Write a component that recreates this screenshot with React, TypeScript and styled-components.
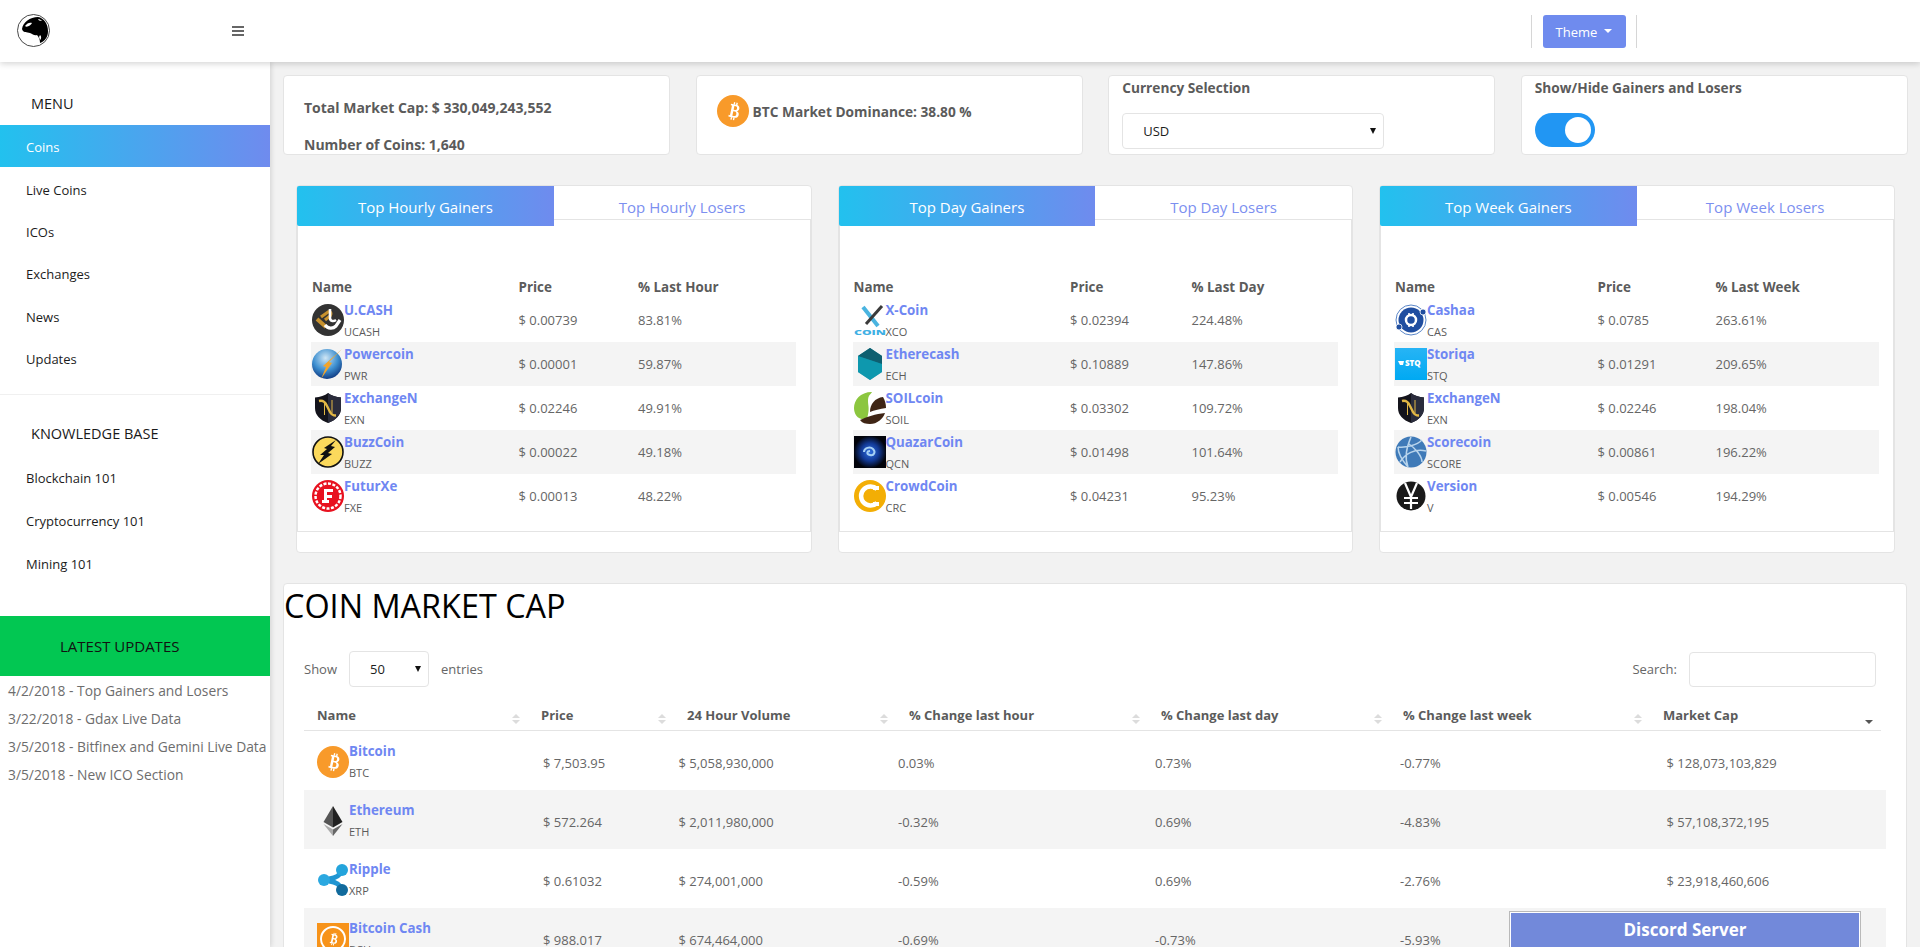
import React from "react";
import styled, { createGlobalStyle } from "styled-components";

const GRAD = "linear-gradient(90deg, #22c1ee 0%, #6f8bee 100%)";
const BLUE = "#6f87f2";

const Global = createGlobalStyle`
  html, body { margin: 0; padding: 0; height: 100%; overflow: hidden; }
  body { background: #f2f2f2; font-family: "Open Sans", "Liberation Sans", sans-serif; font-size: 13px; color: #5b5b5b; }
  * { box-sizing: border-box; }
`;

const Page = styled.div`height: 947px; overflow: hidden; display: flex; flex-direction: column;`;
const Header = styled.header`
  position: relative; z-index: 3; flex: 0 0 62px; height: 62px; background: #fff;
  box-shadow: 0 2px 6px rgba(0,0,0,.16); display: flex; align-items: center;
`;
const LogoWrap = styled.div`margin-left: 17px; width: 33px; height: 33px; margin-top: -1px; svg { display: block; }`;
const Burger = styled.div`
  margin-left: 182px; width: 12px; display: flex; flex-direction: column; gap: 2px;
  span { display: block; height: 2.2px; background: #666; }
`;
const RightGroup = styled.div`
  margin-left: auto; margin-right: 283px; height: 33px; display: flex; width: 106px;
  border-left: 1px solid #d6d6d6; border-right: 1px solid #d6d6d6; justify-content: center; margin-top: 1px;
`;
const ThemeBtn = styled.div`
  width: 83px; height: 33px; background: #6f8bee; border-radius: 3px; color: #fff; font-size: 13px;
  display: flex; align-items: center; justify-content: center; gap: 7px;
  &::after { content: ""; border-left: 4px solid transparent; border-right: 4px solid transparent; border-top: 4px solid #fff; margin-top: -2px; }
`;
const Layout = styled.div`display: flex; flex: 1; min-height: 0;`;
const Sidebar = styled.aside`
  position: relative; z-index: 2; flex: 0 0 270px; width: 270px; background: #fff;
  box-shadow: 1px 0 5px rgba(0,0,0,.14); display: flex; flex-direction: column;
`;
const SideHeading = styled.div<{ $h: number; $pt: number }>`
  height: ${p => p.$h}px; padding: ${p => p.$pt}px 0 0 31px; font-size: 14.5px; color: #1a1a1a; display: flex; align-items: center;
`;
const SideItem = styled.div<{ $active?: boolean; $h: number }>`
  height: ${p => p.$h}px; padding: ${p => (p.$active ? 1 : 0)}px 0 0 26px; display: flex; align-items: center; font-size: 13px;
  margin-bottom: ${p => (p.$active ? 2 : 0)}px;
  color: ${p => (p.$active ? "#fff" : "#1c1c1c")}; background: ${p => (p.$active ? GRAD : "transparent")};
`;
const SideDivider = styled.div`height: 1px; background: #f0f0f0; margin-top: 14px;`;
const Green = styled.div`
  margin-top: 31px; height: 60px; background: #02c752; color: #111; font-size: 15px; display: flex;
  align-items: center; padding-left: 60px;
`;
const Updates = styled.div`padding: 1px 0 0 8px; display: flex; flex-direction: column;`;
const UpdateLine = styled.div`height: 28px; line-height: 28px; font-size: 13.8px; color: #6d6d6d; white-space: nowrap;`;

const Main = styled.main`flex: 1; min-width: 0; padding: 13px 13px 0 13px;`;
const StatsRow = styled.div`display: grid; grid-template-columns: repeat(4, 387px); gap: 25.6px;`;
const Card = styled.div`background: #fff; border: 1px solid #e4e4e4; border-radius: 4px;`;
const StatCard = styled(Card)`height: 80px; overflow: hidden; font-weight: 700; color: #5b5b5b; font-size: 13.7px;`;
const TotalStat = styled(StatCard)`padding: 21px 0 0 20px; font-size: 14px; p { margin: 0 0 16px; line-height: 21px; }`;
const DomStat = styled(StatCard)`display: flex; align-items: center; padding: 0 0 8px 20px; gap: 4px; svg { display: block; flex: none; }`;
const TitleStat = styled(StatCard)`padding: 0 0 0 13px;`;
const StatTitle = styled.div`line-height: 21px; margin-top: 1px;`;
const SelectWrap = styled.div<{ $w: number }>`
  position: relative; width: ${p => p.$w}px; 
  &::after {
    content: ""; position: absolute; right: 8px; top: 50%; margin-top: -3px;
    border-left: 3px solid transparent; border-right: 3px solid transparent; border-top: 6px solid #111;
  }
`;
const Select = styled.select`
  appearance: none; -webkit-appearance: none; display: block; width: 100%; height: 36px; background: #fff;
  border: 1px solid #e4e4e4; border-radius: 4px; font: 400 13px "Open Sans", sans-serif; color: #1c1c1c; padding: 0 20px;
  outline: none;
`;
const CurrencySelect = styled(SelectWrap)`margin-top: 15px;`;
const Switch = styled.div`
  position: relative; width: 60px; height: 34px; border-radius: 17px; background: #2196f3; margin-top: 15px;
  &::after { content: ""; position: absolute; right: 4px; top: 4px; width: 26px; height: 26px; border-radius: 50%; background: #fff; }
`;

const GainersRow = styled.div`
  display: grid; grid-template-columns: repeat(3, 515.5px); gap: 26px; padding: 0 13px; margin-top: 30px;
`;
const GainCard = styled(Card)`height: 368px; position: relative;`;
const Tabs = styled.div`display: grid; grid-template-columns: 1fr 1fr; height: 34px; border-bottom: 1px solid #e4e4e4;`;
const Tab = styled.div<{ $active?: boolean }>`
  height: ${p => (p.$active ? 40 : 33)}px; display: flex; align-items: center; justify-content: center; font-size: 15px;
  padding-top: ${p => (p.$active ? 1 : 8)}px;
  position: relative; z-index: 1; border-radius: 2px 0 0 2px;
  color: ${p => (p.$active ? "#fff" : "#7c8ff0")}; background: ${p => (p.$active ? GRAD : "transparent")};
`;
const TabPane = styled.div`
  height: 312px; border-left: 1px solid #e4e4e4; border-right: 1px solid #e4e4e4; border-bottom: 1px solid #e4e4e4;
  padding: 57px 14px 0 13px;
`;
const MiniTable = styled.div`width: 485px;`;
const MiniRow = styled.div<{ $cols: string; $striped?: boolean }>`
  display: grid; grid-template-columns: ${p => p.$cols}; height: 44px; align-items: center;
  background: ${p => (p.$striped ? "#f4f4f4" : "transparent")}; color: #666;
`;
const MiniHead = styled.div<{ $cols: string }>`
  display: grid; grid-template-columns: ${p => p.$cols}; height: 21px; line-height: 21px; font-weight: 700; color: #5b5b5b; font-size: 13.4px;
`;
const CoinCell = styled.div`display: flex; padding-left: 1px; height: 100%;`;
const BigCoinCell = styled(CoinCell)`padding-left: 13px;`;
const IconBox = styled.div<{ $top: number }>`flex: 0 0 32px; width: 32px; height: 32px; margin-top: ${p => p.$top}px; svg { display: block; }`;
const CoinText = styled.div<{ $top: number }>`padding-top: ${p => p.$top}px;`;
const CoinName = styled.div`font-size: 13.3px; font-weight: 700; color: ${BLUE}; line-height: 21px;`;
const CoinSym = styled.div`font-size: 11px; color: #5b5b5b; line-height: 21px;`;

const TableCard = styled(Card)`margin-top: 30px; padding: 0 20px 0 20px; height: 600px;`;
const Title = styled.h1`margin: 0 0 0 -20px; padding-top: 1px; font-size: 32.4px; font-weight: 500; line-height: 40px; color: #000; height: 40px;`;
const Controls = styled.div`display: flex; justify-content: space-between; align-items: center; margin-top: 27px; height: 36px; padding-right: 10px;`;
const ControlGroup = styled.div`display: flex; align-items: center; gap: 12px; color: #666;`;
const SearchInput = styled.input`width: 187px; height: 35px; border: 1px solid #e4e4e4; border-radius: 4px; background: #fff; outline: none;`;
const HEAD_COLS = "224px 146px 222px 252px 242px 260px 231px";
const BODY_COLS = "226px 135.5px 219.5px 257px 245px 266.5px 232.5px";
const HeadRow = styled.div`
  display: grid; grid-template-columns: ${HEAD_COLS}; width: 1577px; height: 44px; border-bottom: 1px solid #e4e4e4; align-items: end;
`;
const HeadCell = styled.div`position: relative; padding: 0 0 4px 13px; line-height: 21px; font-weight: 700; color: #5b5b5b; white-space: nowrap;`;
const SortMark = styled.span<{ $dir?: "down" }>`
  position: absolute; right: 8px; top: 9px; width: 8px; height: 10px;
  &::before, &::after {
    content: ""; position: absolute; left: 0; border-left: 4px solid transparent; border-right: 4px solid transparent;
  }
  &::before { top: 0; border-bottom: 4.5px solid ${p => (p.$dir ? "transparent" : "#dcdcdc")}; }
  &::after { bottom: 0; border-top: 4.5px solid ${p => (p.$dir ? "#555" : "#dcdcdc")}; }
`;
const BodyRow = styled.div<{ $striped?: boolean }>`
  display: grid; grid-template-columns: ${BODY_COLS}; height: 59px; background: ${p => (p.$striped ? "#f4f4f4" : "transparent")}; color: #666;
`;
const BodyCell = styled.div`padding: 22px 0 0 13px; line-height: 21px; white-space: nowrap;`;
const Discord = styled.div`
  position: fixed; right: 60px; bottom: -5px; width: 350px; height: 40px; background: #7289da; color: #fff;
  font-size: 17px; font-weight: 700; text-align: center; line-height: 34px; z-index: 5;
  border: 1px solid #fff; outline: 1px solid #b9b9b9;
`;

type IconName = "ucash" | "pwr" | "exn" | "buzz" | "fxe" | "xco" | "ech" | "soil" | "qcn" | "crc" | "cas" | "stq" | "score" | "v" | "btc" | "eth" | "xrp" | "bch";

const BtcGlyph = ({ s = 1, fill = "#fff" }: { s?: number; fill?: string }) => (
  <g transform={`translate(16 16) rotate(12) scale(${s}) translate(-16 -16)`}>
    <path fill={fill} fillRule="evenodd" d="M12 8h6.2c2.9 0 4.5 1.5 4.5 3.8 0 1.6-.8 2.8-2.2 3.4 1.9.5 3 1.9 3 3.9 0 2.8-2 4.4-5.2 4.400H12v-2h1.500V10H12zm4.400 2v4.300h1.600c1.300 0 2-.8 2-2.200s-.7-2.100-2-2.100zm0 6.200v5.400h1.800c1.600 0 2.400-1 2.400-2.700s-.9-2.700-2.500-2.700z" />
    <rect x="15" y="5.500" width="1.600" height="3" fill={fill} /><rect x="18" y="5.500" width="1.600" height="3" fill={fill} />
    <rect x="15" y="23.500" width="1.600" height="3" fill={fill} /><rect x="18" y="23.500" width="1.600" height="3" fill={fill} />
  </g>
);
const ShieldN = () => (
  <>
    <path d="M16 1c-3 2.500-8 4-13 4.500 V16c0 7 5 12 13 15 8-3 13-8 13-15V5.500C24 5 19 3.500 16 1z" fill="#14141c" />
    <path d="M16 1c3 2.500 8 4 13 4.500V16c0 7-5 12-13 15z" fill="#2a2c3c" />
    <path d="M7 9c4-1 6 .5 8 5l3 6c1 2 3 3.500 6 3.500" fill="none" stroke="#e3b845" strokeWidth="2.400" />
    <path d="M12.500 11v12M20 8v13" stroke="#e3b845" strokeWidth="1" fill="none" />
  </>
);

const CoinIcon = ({ name }: { name: IconName }) => {
  const body = (() => {
    switch (name) {
      case "ucash": return (<>
        <circle cx="16" cy="16" r="16" fill="#333" />
        <path d="M5 15l9 8" stroke="#c8922e" strokeWidth="4" />
        <path d="M9 13l7-5c2-1 4 1 2 4l-5 4" stroke="#c8922e" strokeWidth="3.200" fill="none" />
        <path d="M13 21c3 4 8 4 11 1l4-6" stroke="#fff" strokeWidth="3.200" fill="none" />
        <path d="M18 5v9c0 3 3 4 6 2" stroke="#fff" strokeWidth="2.600" fill="none" />
      </>);
      case "pwr": return (<>
        <defs><radialGradient id="pw" cx="45%" cy="30%" r="75%"><stop offset="0" stopColor="#cfe6f5" /><stop offset=".55" stopColor="#3d8fd0" /><stop offset="1" stopColor="#0a2f78" /></radialGradient></defs>
        <circle cx="15" cy="16" r="15" fill="url(#pw)" />
        <path d="M30 1L17 14l3 1-11 16 5-12-3-1z" fill="#f2a42a" />
      </>);
      case "exn": return <ShieldN />;
      case "buzz": return (<>
        <circle cx="16" cy="16" r="15" fill="#fbd95c" stroke="#111" strokeWidth="1.600" />
        <path d="M24 4L12 12l3 1-7 6 4 0-6 9 14-10-4-1 7-6-4-1z" fill="#111" />
      </>);
      case "fxe": return (<>
        <circle cx="16" cy="16" r="16" fill="#e8111f" />
        <circle cx="16" cy="16" r="12.500" fill="none" stroke="#fff" strokeWidth="2.500" strokeDasharray="3 1.500" />
        <path d="M12 9h9v3h-6v3h5v3h-5v2h2v3h-7v-3h2z" fill="#fff" />
      </>);
      case "xco": return (<>
        <path d="M9 3l15 19" stroke="#4ab4e0" strokeWidth="4" />
        <path d="M28 2L12 20" stroke="#3a3a3a" strokeWidth="3" />
        <text x="0" y="31" textLength="32" lengthAdjust="spacingAndGlyphs" fontFamily="Open Sans, sans-serif" fontWeight="800" fontSize="7" fill="#3fb0e4">COIN</text>
      </>);
      case "ech": return (<>
        <path d="M16 0l12 8v16l-12 8-12-8V8z" fill="#0f7f92" />
        <path d="M16 0l12 8v8L4 8z" fill="#0e5f70" />
        <path d="M4 8l24 8v8l-12 8-12-8z" fill="#0ea3bb" opacity=".7" />
      </>);
      case "soil": return (<>
        <path d="M13 27C4 29 0 22 0 16 0 8 6 0 18 0c-1 2-4 3-4 9 0 5 2 7-1 18z" fill="#8cc63f" />
        <path d="M16 20c0-8 5-14 13-15 2 3 3 7 3 11-6 1-12 2-16 4z" fill="#3f2515" />
        <path d="M6 28c6-3 16-6 25-7-2 6-8 11-15 11-4 0-8-1-10-4z" fill="#3f2515" />
      </>);
      case "qcn": return (<>
        <defs><radialGradient id="qc"><stop offset="0" stopColor="#2f6fe0" /><stop offset=".55" stopColor="#123a96" /><stop offset="1" stopColor="#020510" /></radialGradient></defs>
        <rect width="32" height="32" fill="#01030a" /><circle cx="16" cy="16" r="16" fill="url(#qc)" />
        <path d="M10 16c0-4 6-6 9-3s1 7-3 6-3-4 0-4" fill="none" stroke="#a6d0f5" strokeWidth="2" />
      </>);
      case "crc": return (<>
        <circle cx="16" cy="16" r="16" fill="#f3ae05" />
        <path d="M23 9a9.500 9.500 0 1 0 0 14" fill="none" stroke="#fff" strokeWidth="4.500" />
        <rect x="19" y="6" width="6" height="4" fill="#fff" /><rect x="19" y="22" width="6" height="4" fill="#fff" />
      </>);
      case "cas": return (<>
        <circle cx="16" cy="16" r="15" fill="none" stroke="#5a86c8" strokeWidth="1" />
        <circle cx="16" cy="16" r="12.500" fill="#204ea0" />
        <circle cx="16" cy="16" r="5" fill="none" stroke="#fff" strokeWidth="2.500" />
        <path d="M14 9v3M18 9v3M14 20v3M18 20v3" stroke="#fff" strokeWidth="1.600" />
        <circle cx="28" cy="8" r="3" fill="#204ea0" stroke="#fff" strokeWidth=".8" /><circle cx="4" cy="23" r="3" fill="#204ea0" stroke="#fff" strokeWidth=".8" />
      </>);
      case "stq": return (<>
        <defs><linearGradient id="sq" x1="0" y1="0" x2="0" y2="1"><stop offset="0" stopColor="#27b4f5" /><stop offset="1" stopColor="#00a9f2" /></linearGradient></defs>
        <rect width="32" height="32" fill="url(#sq)" />
        <path d="M3 13h6l-1 4H5z" fill="#fff" />
        <text x="10" y="18" fontFamily="Open Sans, sans-serif" fontWeight="800" fontSize="8" fill="#fff">STQ</text>
      </>);
      case "score": return (<>
        <circle cx="16" cy="16" r="15.500" fill="#3f7ab8" />
        <path d="M3 11c8 1 19-2 24-7M16 1c-4 9-7 20-3 30M5 26c5-8 15-14 26-11M14 8c6 4 13 12 13 18M3 11c0 5 3 12 10 20" fill="none" stroke="#b8d4ec" strokeWidth="1.500" />
      </>);
      case "v": return (<>
        <circle cx="16" cy="16" r="14.500" fill="#1a1a1a" />
        <path d="M10 3l6 14 6-14M16 17v12M9 18h14M9 23h14" fill="none" stroke="#fff" strokeWidth="2.200" />
      </>);
      case "btc": return (<>
        <circle cx="16" cy="16" r="16" fill="#f89a2a" /><BtcGlyph s={.85} />
      </>);
      case "eth": return (<>
        <path d="M16 1L6.500 17 16 22.500z" fill="#555" /><path d="M16 1l9.500 16L16 22.500z" fill="#222" />
        <path d="M6.500 19L16 31V24.500z" fill="#aaa" /><path d="M25.500 19L16 31V24.500z" fill="#666" />
      </>);
      case "xrp": return (<>
        <path d="M25 6c-2 6-6 8-13 9M12 17c7 1 11 3 13 9" fill="none" stroke="#1f95d2" strokeWidth="5" />
        <circle cx="25" cy="6" r="6" fill="#24a4dc" /><circle cx="7" cy="16" r="6" fill="#2ba8e0" /><circle cx="25" cy="26" r="6" fill="#116a9c" />
      </>);
      case "bch": return (<>
        <rect width="32" height="32" fill="#f7931a" /><circle cx="16" cy="16" r="12" fill="none" stroke="#fff" strokeWidth="2" /><BtcGlyph s={.6} />
      </>);
    }
  })();
  return <svg viewBox="0 0 32 32" width="32" height="32" aria-hidden="true">{body}</svg>;
};

const Logo = () => (
  <svg viewBox="0 0 33 33" width="33" height="33" aria-hidden="true">
    <circle cx="16.500" cy="16.500" r="16" fill="#fff" stroke="#333" strokeWidth=".9" />
    <path d="M5 15C6 8 13 3 21 3c6 1 10 7 10 14 0 6-3 10-8 12 0-3-1-6-3-8-3 1-4-1-7-2-3-1-7 0-8-4z" fill="#000" />
    <path d="M8 12c2-3 5-4 7-3-1 2-5 5-7 3zM21 5c2 0 3 1 4 2l-3-.5zM23 21c1.500 1 1.500 4 0 5l-1-3z" fill="#fff" />
  </svg>
);

interface Coin { icon: IconName; name: string; sym: string; price: string; pct: string; }
interface Panel { active: string; other: string; pctLabel: string; cols: string; coins: Coin[]; }

const panels: Panel[] = [
  { active: "Top Hourly Gainers", other: "Top Hourly Losers", pctLabel: "% Last Hour", cols: "207.5px 119.5px 1fr", coins: [
    { icon: "ucash", name: "U.CASH", sym: "UCASH", price: "$ 0.00739", pct: "83.81%" },
    { icon: "pwr", name: "Powercoin", sym: "PWR", price: "$ 0.00001", pct: "59.87%" },
    { icon: "exn", name: "ExchangeN", sym: "EXN", price: "$ 0.02246", pct: "49.91%" },
    { icon: "buzz", name: "BuzzCoin", sym: "BUZZ", price: "$ 0.00022", pct: "49.18%" },
    { icon: "fxe", name: "FuturXe", sym: "FXE", price: "$ 0.00013", pct: "48.22%" },
  ] },
  { active: "Top Day Gainers", other: "Top Day Losers", pctLabel: "% Last Day", cols: "217.5px 121.5px 1fr", coins: [
    { icon: "xco", name: "X-Coin", sym: "XCO", price: "$ 0.02394", pct: "224.48%" },
    { icon: "ech", name: "Etherecash", sym: "ECH", price: "$ 0.10889", pct: "147.86%" },
    { icon: "soil", name: "SOILcoin", sym: "SOIL", price: "$ 0.03302", pct: "109.72%" },
    { icon: "qcn", name: "QuazarCoin", sym: "QCN", price: "$ 0.01498", pct: "101.64%" },
    { icon: "crc", name: "CrowdCoin", sym: "CRC", price: "$ 0.04231", pct: "95.23%" },
  ] },
  { active: "Top Week Gainers", other: "Top Week Losers", pctLabel: "% Last Week", cols: "203.5px 118px 1fr", coins: [
    { icon: "cas", name: "Cashaa", sym: "CAS", price: "$ 0.0785", pct: "263.61%" },
    { icon: "stq", name: "Storiqa", sym: "STQ", price: "$ 0.01291", pct: "209.65%" },
    { icon: "exn", name: "ExchangeN", sym: "EXN", price: "$ 0.02246", pct: "198.04%" },
    { icon: "score", name: "Scorecoin", sym: "SCORE", price: "$ 0.00861", pct: "196.22%" },
    { icon: "v", name: "Version", sym: "V", price: "$ 0.00546", pct: "194.29%" },
  ] },
];

const market: { icon: IconName; name: string; sym: string; vals: string[] }[] = [
  { icon: "btc", name: "Bitcoin", sym: "BTC", vals: ["$ 7,503.95", "$ 5,058,930,000", "0.03%", "0.73%", "-0.77%", "$ 128,073,103,829"] },
  { icon: "eth", name: "Ethereum", sym: "ETH", vals: ["$ 572.264", "$ 2,011,980,000", "-0.32%", "0.69%", "-4.83%", "$ 57,108,372,195"] },
  { icon: "xrp", name: "Ripple", sym: "XRP", vals: ["$ 0.61032", "$ 274,001,000", "-0.59%", "0.69%", "-2.76%", "$ 23,918,460,606"] },
  { icon: "bch", name: "Bitcoin Cash", sym: "BCH", vals: ["$ 988.017", "$ 674,464,000", "-0.69%", "-0.73%", "-5.93%", ""] },
];

const heads = ["Name", "Price", "24 Hour Volume", "% Change last hour", "% Change last day", "% Change last week", "Market Cap"];

export default function App() {
  return (
    <Page>
      <Global />
      <Header>
        <LogoWrap><Logo /></LogoWrap>
        <Burger><span /><span /><span /></Burger>
        <RightGroup><ThemeBtn>Theme</ThemeBtn></RightGroup>
      </Header>
      <Layout>
        <Sidebar>
          <SideHeading $h={63} $pt={20}>MENU</SideHeading>
          <SideItem $active $h={42}>Coins</SideItem>
          {["Live Coins", "ICOs", "Exchanges", "News", "Updates"].map(t => <SideItem key={t} $h={42.2}>{t}</SideItem>)}
          <SideDivider />
          <SideHeading $h={62} $pt={15}>KNOWLEDGE BASE</SideHeading>
          {["Blockchain 101", "Cryptocurrency 101", "Mining 101"].map(t => <SideItem key={t} $h={42.7}>{t}</SideItem>)}
          <Green>LATEST UPDATES</Green>
          <Updates>
            {["4/2/2018 - Top Gainers and Losers", "3/22/2018 - Gdax Live Data", "3/5/2018 - Bitfinex and Gemini Live Data", "3/5/2018 - New ICO Section"].map(t => <UpdateLine key={t}>{t}</UpdateLine>)}
          </Updates>
        </Sidebar>
        <Main>
          <StatsRow>
            <TotalStat>
              <p>Total Market Cap: $ 330,049,243,552</p>
              <p>Number of Coins: 1,640</p>
            </TotalStat>
            <DomStat><CoinIcon name="btc" />BTC Market Dominance: 38.80 %</DomStat>
            <TitleStat>
              <StatTitle>Currency Selection</StatTitle>
              <CurrencySelect $w={262}><Select defaultValue="USD"><option>USD</option></Select></CurrencySelect>
            </TitleStat>
            <TitleStat>
              <StatTitle>Show/Hide Gainers and Losers</StatTitle>
              <Switch />
            </TitleStat>
          </StatsRow>
          <GainersRow>
            {panels.map(p => (
              <GainCard key={p.active}>
                <Tabs>
                  <Tab $active>{p.active}</Tab>
                  <Tab>{p.other}</Tab>
                </Tabs>
                <TabPane>
                  <MiniTable>
                    <MiniHead $cols={p.cols}><CoinCell>Name</CoinCell><div>Price</div><div>{p.pctLabel}</div></MiniHead>
                    {p.coins.map((c, i) => (
                      <MiniRow key={c.name} $cols={p.cols} $striped={i % 2 === 1}>
                        <CoinCell>
                          <IconBox $top={6}><CoinIcon name={c.icon} /></IconBox>
                          <CoinText $top={2}><CoinName>{c.name}</CoinName><CoinSym>{c.sym}</CoinSym></CoinText>
                        </CoinCell>
                        <div>{c.price}</div>
                        <div>{c.pct}</div>
                      </MiniRow>
                    ))}
                  </MiniTable>
                </TabPane>
              </GainCard>
            ))}
          </GainersRow>
          <TableCard>
            <Title>COIN MARKET CAP</Title>
            <Controls>
              <ControlGroup>Show<SelectWrap $w={80}><Select defaultValue="50"><option>50</option></Select></SelectWrap>entries</ControlGroup>
              <ControlGroup>Search:<SearchInput /></ControlGroup>
            </Controls>
            <HeadRow>
              {heads.map((h, i) => (
                <HeadCell key={h}>{h}<SortMark $dir={i === 6 ? "down" : undefined} /></HeadCell>
              ))}
            </HeadRow>
            {market.map((c, i) => (
              <BodyRow key={c.name} $striped={i % 2 === 1}>
                <BigCoinCell>
                  <IconBox $top={15}><CoinIcon name={c.icon} /></IconBox>
                  <CoinText $top={10}><CoinName>{c.name}</CoinName><CoinSym>{c.sym}</CoinSym></CoinText>
                </BigCoinCell>
                {c.vals.map((v, j) => <BodyCell key={j}>{v}</BodyCell>)}
              </BodyRow>
            ))}
          </TableCard>
        </Main>
      </Layout>
      <Discord>Discord Server</Discord>
    </Page>
  );
}
